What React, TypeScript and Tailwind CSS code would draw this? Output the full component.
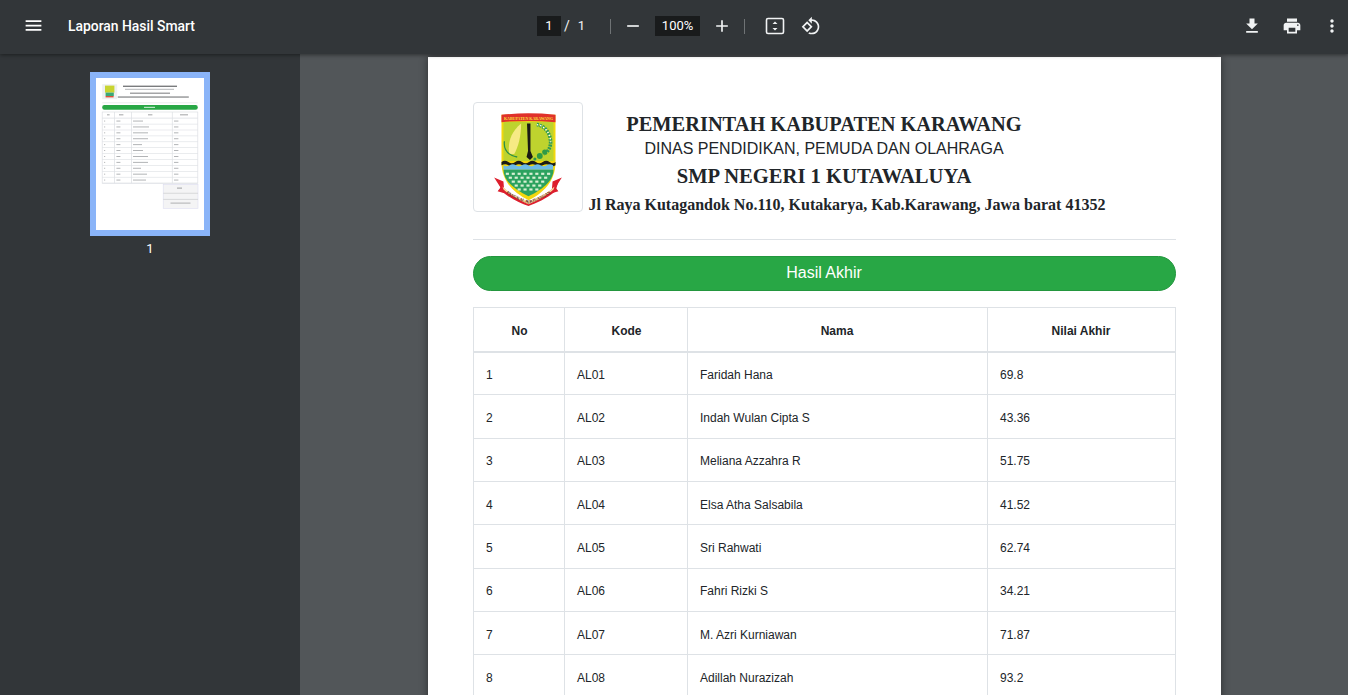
import React from "react";

const P = ({ d, className = "w-6 h-6" }: { d: string; className?: string }) => (
  <svg viewBox="0 0 24 24" className={className} fill="currentColor">
    <path d={d} />
  </svg>
);

const rows = [
  ["1", "AL01", "Faridah Hana", "69.8"],
  ["2", "AL02", "Indah Wulan Cipta S", "43.36"],
  ["3", "AL03", "Meliana Azzahra R", "51.75"],
  ["4", "AL04", "Elsa Atha Salsabila", "41.52"],
  ["5", "AL05", "Sri Rahwati", "62.74"],
  ["6", "AL06", "Fahri Rizki S", "34.21"],
  ["7", "AL07", "M. Azri Kurniawan", "71.87"],
  ["8", "AL08", "Adillah Nurazizah", "93.2"],
];

function Crest({ className }: { className?: string }) {
  const dots: React.ReactNode[] = [];
  for (let r = 0; r < 5; r++) {
    const count = 8 - r;
    const y = 71 + r * 4;
    const w = (count - 1) * 6;
    for (let i = 0; i < count; i++) {
      dots.push(<rect key={`${r}-${i}`} x={55 - w / 2 + i * 6 - 1.6} y={y} width="3.2" height="2.2" fill="#d8f0d4" />);
    }
  }
  return (
    <svg viewBox="0 0 110 110" className={className}>
      <path d="M20.5 76L30 80L31 92L24 90L27 86Z" fill="#dd1f2d" />
      <path d="M89.5 76L80 80L79 92L86 90L83 86Z" fill="#dd1f2d" />
      <path d="M28 12H83V60C83 80 70 92 55.5 99C41 92 28 80 28 60Z" fill="#f2d70e" />
      <path d="M30 19H81V59H30Z" fill="#bed32e" />
      <path d="M28 12Q55 9 83 12V19.5Q55 17 28 19.5Z" fill="#e0312b" />
      <text x="55.5" y="17.5" textAnchor="middle" fontSize="5" fontWeight="700" fill="#f7e23a" textLength="50" lengthAdjust="spacingAndGlyphs" fontFamily="Liberation Serif, serif">KABUPATEN KARAWANG</text>
      <path d="M36 52C34 42 37 30 48 21C48 34 45 45 41 52Z" fill="#f6ea84" />
      <path d="M31 39C30 47 34 53 44 55" fill="none" stroke="#2f8f46" strokeWidth="1.3" />
      <path d="M54 21H57.5L57.5 49L60 55L57 58L53.5 55L55 49Z" fill="#1a1a14" />
      <path d="M64 22C72 23 78 31 78 40C78 46 75 50 71 52" fill="none" stroke="#2f9a55" strokeWidth="3.6" strokeDasharray="2 1" />
      <path d="M64 22C72 23 78 31 78 40" fill="none" stroke="#ffffff" strokeWidth="1.4" strokeDasharray="1.4 2" />
      <circle cx="67" cy="54" r="3" fill="#2f9a45" />
      <circle cx="72" cy="50" r="2.6" fill="#2f9a45" />
      <circle cx="62" cy="57" r="1.6" fill="#2f9a45" />
      <path d="M28 60q3.5-2.5 7 0t7 0 7 0 7 0 7 0 7 0 7 0 6 0v3.5q-3 2-6 0t-7 0-7 0-7 0-7 0-7 0-7 0-7 0Z" fill="#1c1c16" />
      <path d="M30 63.5q3.2 2 6.3 0t6.3 0 6.3 0 6.3 0 6.3 0 6.3 0 6.3 0 6.5 0V68H30Z" fill="#6dbbe6" />
      <path d="M30 68H81C81 80 68 89 55.5 95C43 89 30 80 30 68Z" fill="#2ca25f" />
      {dots}
      <path d="M25 80C34 93 45 97 55.5 101C66 97 77 93 86 80L83 90C73 98 64 102 55.5 105C47 102 38 98 28 90Z" fill="#dd1f2d" />
      <path d="M29 85C37 93 46 97 55.5 100C65 97 74 93 82 85L81 88C73 95 65 99 55.5 103C46 99 38 95 30 88Z" fill="#f8dfa0" />
      <path id="crest-arc" d="M29 88.5C37 96 46 99 55.5 102.3C65 99 74 96 82 88.5" fill="none" />
      <text fontSize="4.2" fontWeight="700" fill="#5a1a12" fontFamily="Liberation Serif, serif" textAnchor="middle">
        <textPath href="#crest-arc" startOffset="50%">PANGKAL PERJUANGAN</textPath>
      </text>
    </svg>
  );
}

function Thumb() {
  const rowY = Array.from({ length: 11 }, (_, i) => 40.2 + i * 5.9);
  const cols = [0, 12.4, 29.1, 70, 95.6];
  const nameW = [10, 16, 15, 15, 9, 10, 15, 15, 8, 14, 13];
  return (
    <svg viewBox="0 0 108 152" className="block w-[108px] h-[152px] bg-white blur-[0.4px]">
      <rect x="6.2" y="6.2" width="15" height="15" fill="#eef0f2" />
      <rect x="9" y="7.6" width="9.4" height="7" fill="#c8d430" />
      <rect x="9.6" y="14.6" width="8.2" height="3.4" fill="#3aa878" />
      <rect x="9.6" y="18" width="8" height="1.4" fill="#e0503a" />
      <rect x="27" y="7.6" width="54" height="1.4" fill="#7a7c7e" />
      <rect x="29" y="10.8" width="49" height="1" fill="#b4b6b8" />
      <rect x="34" y="14.6" width="40" height="1.2" fill="#8e9092" />
      <rect x="21.8" y="18.4" width="71" height="1.3" fill="#8a8c8e" />
      <rect x="6.2" y="24.6" width="95.6" height="0.6" fill="#dcdfe2" />
      <rect x="6.2" y="27" width="95.6" height="4.8" rx="2.2" fill="#28a745" />
      <rect x="48" y="28.8" width="11" height="1.2" fill="#b8e6c4" />
      <rect x="6.2" y="34" width="95.6" height="71.2" fill="none" stroke="#dcdfe3" strokeWidth="0.7" />
      {cols.slice(1, 4).map((c) => (
        <rect key={c} x={6.2 + c - 0.3} y="34" width="0.7" height="71.2" fill="#dcdfe3" />
      ))}
      <rect x="6.2" y="39.7" width="95.6" height="0.8" fill="#dcdfe3" />
      <rect x="11" y="36.4" width="2.6" height="0.9" fill="#97999b" />
      <rect x="23" y="36.4" width="4.4" height="0.9" fill="#97999b" />
      <rect x="52" y="36.4" width="4.4" height="0.9" fill="#97999b" />
      <rect x="84" y="36.4" width="8" height="0.9" fill="#97999b" />
      {rowY.map((y, i) => (
        <g key={y}>
          <rect x="6.2" y={y + 5.6} width="95.6" height="0.6" fill="#dcdfe3" />
          <rect x="8" y={y + 2.4} width="1.2" height="0.9" fill="#b0b2b4" />
          <rect x="20.4" y={y + 2.4} width="4" height="0.9" fill="#aaacae" />
          <rect x="37" y={y + 2.4} width={nameW[i]} height="0.9" fill="#aaacae" />
          <rect x="78" y={y + 2.4} width="4.4" height="0.9" fill="#aaacae" />
        </g>
      ))}
      <rect x="67.2" y="106.3" width="34.8" height="24" fill="#f4f4f5" stroke="#dcddf0" strokeWidth="0.6" />
      <rect x="67.2" y="114.8" width="34.8" height="0.8" fill="#cfd1d3" />
      <rect x="67.2" y="120.9" width="34.8" height="0.8" fill="#cfd1d3" />
      <rect x="81" y="109.6" width="5" height="1" fill="#9c9ea0" />
      <rect x="74.5" y="124.6" width="20" height="1" fill="#aeb0b2" />
    </svg>
  );
}

const th = "border border-[#dee2e6] border-b-2 font-bold text-center align-middle pt-[4px]";
const thShift = "border border-[#dee2e6] border-b-2 font-bold text-center align-middle pt-[4px] pl-[2px]";
const td = "border border-[#dee2e6] pl-[12.5px] pt-[3px] align-middle";

export default function App() {
  return (
    <div className="relative flex flex-col w-[1348px] h-[695px] overflow-hidden bg-[#323639]" style={{ fontFamily: "Roboto, sans-serif" }}>
      <header className="relative z-10 flex items-center h-[54px] pb-[2px] shrink-0 bg-[#323639] text-[#f1f3f4] shadow-[0_1px_4px_rgba(0,0,0,0.45)]">
        <div className="flex items-center w-[537px] shrink-0">
          <P className="w-[21px] h-[21px] ml-[23px] text-white" d="M3 18h18v-2H3v2zm0-5h18v-2H3v2zm0-7v2h18V6H3z" />
          <span className="ml-[24px] pt-px text-[13.9px] font-medium text-white">Laporan Hasil Smart</span>
        </div>
        <div className="flex items-center flex-1">
          <span className="flex items-center justify-center w-6 h-5 bg-[#191b1c] text-[13px] text-white">1</span>
          <span className="ml-[3px] text-[14px]">/</span>
          <span className="ml-[8px] text-[13px]">1</span>
          <span className="ml-[25px] w-px h-[15px] bg-[#6f7375]" />
          <P className="w-5 h-5 ml-[12px]" d="M19 13H5v-2h14v2z" />
          <span className="ml-[12px] flex items-center justify-center w-[45px] h-5 bg-[#191b1c] text-[13px] text-white">100%</span>
          <P className="w-5 h-5 ml-[12px]" d="M19 13h-6v6h-2v-6H5v-2h6V5h2v6h6v2z" />
          <span className="ml-[12px] w-px h-[15px] bg-[#6f7375]" />
          <svg viewBox="0 0 20 18" className="w-5 h-[18px] ml-[20px]" fill="none">
            <rect x="1.5" y="1.5" width="17" height="15" rx="1.5" stroke="currentColor" strokeWidth="1.6" />
            <path d="M7.5 7L10 4.5L12.5 7ZM7.5 11L10 13.5L12.5 11Z" fill="currentColor" />
          </svg>
          <P className="w-5 h-5 ml-[16px]" d="M7.34 6.41L.86 12.9l6.49 6.48 6.49-6.48-6.5-6.49zM3.69 12.9l3.66-3.66L11 12.9l-3.66 3.66-3.65-3.66zm15.67-6.26C17.61 4.88 15.3 4 13 4V.76L8.76 5 13 9.24V6c1.79 0 3.58.68 4.95 2.05 2.73 2.73 2.73 7.17 0 9.9C16.58 19.32 14.79 20 13 20c-.97 0-1.94-.21-2.84-.61l-1.49 1.49C10.02 21.62 11.51 22 13 22c2.3 0 4.61-.88 6.36-2.64 3.52-3.51 3.52-9.21 0-12.72z" />
        </div>
        <div className="flex items-center gap-5 pr-[6px] text-[#f1f3f4]">
          <P className="w-5 h-5" d="M19 9h-4V3H9v6H5l7 7 7-7zM5 18v2h14v-2H5z" />
          <P className="w-5 h-5" d="M19 8H5c-1.66 0-3 1.34-3 3v6h4v4h12v-4h4v-6c0-1.66-1.34-3-3-3zm-3 11H8v-5h8v5zm3-7c-.55 0-1-.45-1-1s.45-1 1-1 1 .45 1 1-.45 1-1 1zm-1-9H6v4h12V3z" />
          <P className="w-5 h-5" d="M12 8c1.1 0 2-.9 2-2s-.9-2-2-2-2 .9-2 2 .9 2 2 2zm0 2c-1.1 0-2 .9-2 2s.9 2 2 2 2-.9 2-2-.9-2-2-2zm0 6c-1.1 0-2 .9-2 2s.9 2 2 2 2-.9 2-2-.9-2-2-2z" />
        </div>
      </header>

      <div className="flex flex-1 min-h-0">
        <aside className="w-[300px] shrink-0 bg-[#323639] flex flex-col items-center pt-[18px]">
          <div className="border-[6px] border-[#8ab4f8]">
            <Thumb />
          </div>
          <div className="mt-[5px] text-[13px] leading-[15px] text-white">1</div>
        </aside>

        <main className="flex-1 min-w-0 bg-[#525659] flex justify-center pt-[3px] overflow-hidden">
          <div className="w-[793px] shrink-0 h-[900px] bg-white px-[45px] pt-[45px] shadow-[0_0_8px_rgba(0,0,0,0.45)] text-[#212529]" style={{ fontFamily: '"Liberation Sans", sans-serif' }}>
            <div className="grid grid-cols-1">
              <div className="col-start-1 row-start-1 w-[110px] h-[110px] border border-[#dee2e6] rounded-[4px] bg-white overflow-hidden">
                <Crest className="w-full h-full" />
              </div>
              <div className="col-start-1 row-start-1 pt-[10px] text-center">
                <div className="text-[20.4px] leading-6 font-bold" style={{ fontFamily: '"Liberation Serif", serif' }}>PEMERINTAH KABUPATEN KARAWANG</div>
                <div className="text-[16px] leading-6 pt-px">DINAS PENDIDIKAN, PEMUDA DAN OLAHRAGA</div>
                <div className="text-[20.6px] leading-6 font-bold mt-[3px]" style={{ fontFamily: '"Liberation Serif", serif' }}>SMP NEGERI 1 KUTAWALUYA</div>
                <div className="text-[16px] leading-6 font-bold mt-[5px] text-left pl-[116px] whitespace-nowrap" style={{ fontFamily: '"Liberation Serif", serif' }}>Jl Raya Kutagandok No.110, Kutakarya, Kab.Karawang, Jawa barat 41352</div>
              </div>
            </div>

            <div className="mt-[22px] h-px bg-[#dee2e6]" />

            <div className="mt-4 h-[35px] pb-px rounded-[18px] bg-[#28a745] border border-[#23963e] flex items-center justify-center text-[16px] text-white">Hasil Akhir</div>

            <table className="mt-4 w-[702px] table-fixed border-collapse text-[12px]">
              <colgroup>
                <col className="w-[91px]" />
                <col className="w-[123px]" />
                <col className="w-[300px]" />
                <col className="w-[188px]" />
              </colgroup>
              <thead>
                <tr className="h-[44px]">
                  <th className={thShift}>No</th>
                  <th className={thShift}>Kode</th>
                  <th className={th}>Nama</th>
                  <th className={th}>Nilai Akhir</th>
                </tr>
              </thead>
              <tbody>
                {rows.map((r) => (
                  <tr key={r[0]} className="h-[43.33px]">
                    {r.map((c, i) => (
                      <td key={i} className={td}>{c}</td>
                    ))}
                  </tr>
                ))}
              </tbody>
            </table>
          </div>
        </main>
      </div>
    </div>
  );
}
